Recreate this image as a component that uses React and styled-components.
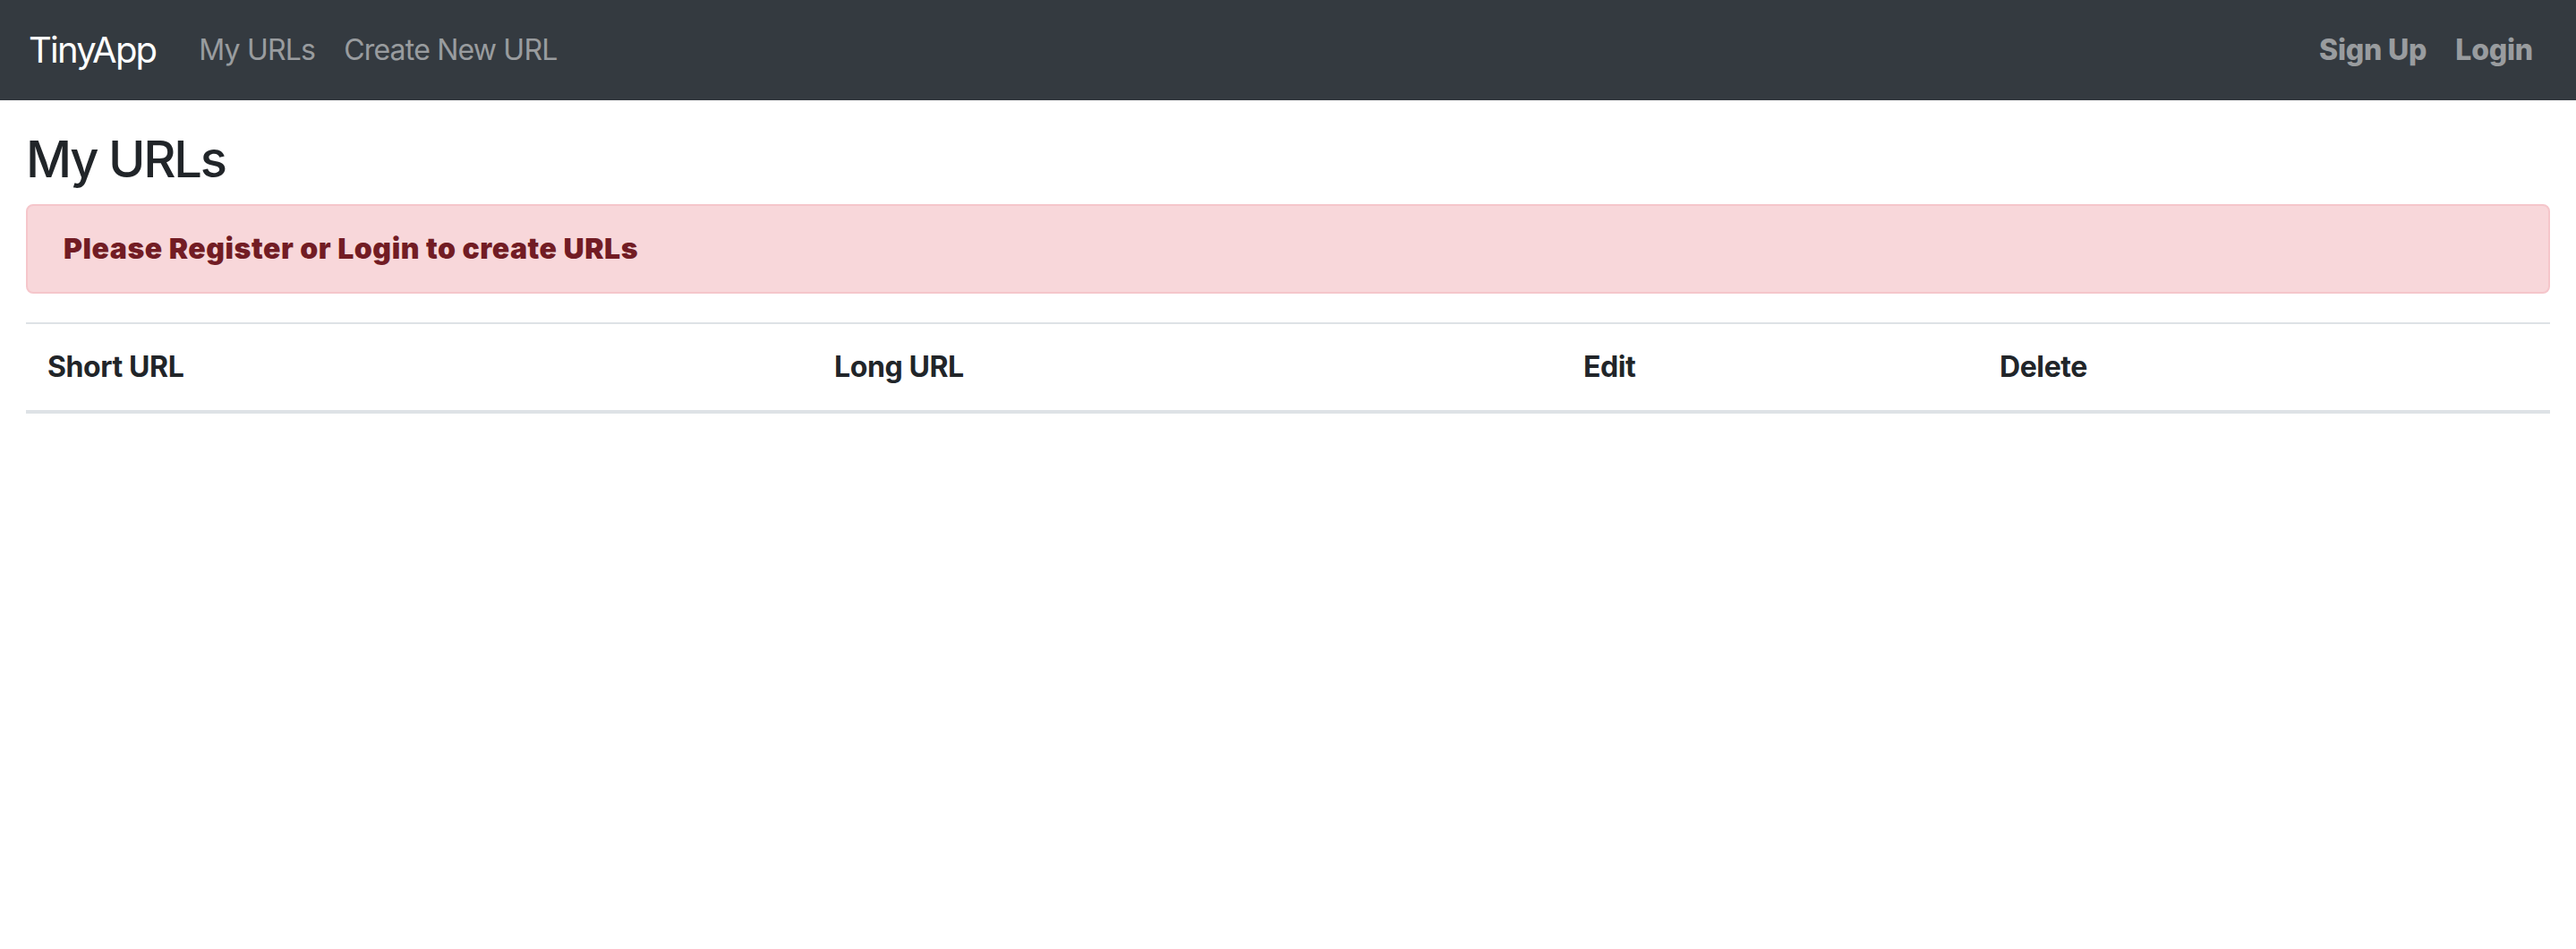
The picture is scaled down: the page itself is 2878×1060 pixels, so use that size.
import React from 'react'
import styled, { createGlobalStyle } from 'styled-components'

const GlobalStyle = createGlobalStyle`
  html, body {
    margin: 0;
    padding: 0;
    background: #fff;
  }
  body {
    font-family: Inter, "Noto Sans", "Liberation Sans", sans-serif;
    font-size: 32px;
    line-height: 1.5;
    color: #212529;
  }
`

const Navbar = styled.nav`
  display: flex;
  align-items: center;
  justify-content: space-between;
  height: 112px;
  box-sizing: border-box;
  padding: 16px 32px;
  background: #343a40;
`

const NavGroup = styled.div`
  display: flex;
  align-items: center;
`

const Brand = styled.a`
  font-size: 40px;
  line-height: 60px;
  color: #fff;
  margin-right: 32px;
  text-decoration: none;
  letter-spacing: -1.8px;
`

const NavLink = styled.a`
  padding: 0 16px;
  font-size: 32px;
  line-height: 48px;
  color: rgba(255, 255, 255, 0.5);
  text-decoration: none;
  font-weight: ${p => (p.$bold ? 800 : 400)};
  letter-spacing: ${p => (p.$bold ? '-0.2px' : '-0.8px')};
`

const Container = styled.main`
  padding: 33px 29px 0;
`

const Title = styled.h3`
  margin: 0 0 16px;
  font-size: 56px;
  line-height: 1.2;
  font-weight: 500;
  letter-spacing: -2.2px;
`

const Alert = styled.div`
  padding: 24px 40px;
  margin-bottom: 32px;
  border: 2px solid #f5c6cb;
  border-radius: 8px;
  background: #f8d7da;
  color: #721c24;
  font-size: 32px;
  line-height: 48px;
  font-weight: 900;
  letter-spacing: 0.55px;
`

const Table = styled.table`
  width: 100%;
  border-collapse: collapse;
  table-layout: fixed;
`

const Th = styled.th`
  width: ${p => p.$w || 'auto'};
  text-align: left;
  padding: 24px;
  font-size: 32px;
  line-height: 48px;
  font-weight: 700;
  letter-spacing: -0.4px;
  border-top: 2px solid #dee2e6;
  border-bottom: 4px solid #dee2e6;
`

export default function App() {
  return (
    <>
      <GlobalStyle />
      <Navbar>
        <NavGroup>
          <Brand href="#">TinyApp</Brand>
          <NavLink href="#">My URLs</NavLink>
          <NavLink href="#">Create New URL</NavLink>
        </NavGroup>
        <NavGroup>
          <NavLink href="#" $bold>Sign Up</NavLink>
          <NavLink href="#" $bold>Login</NavLink>
        </NavGroup>
      </Navbar>
      <Container>
        <Title>My URLs</Title>
        <Alert>Please Register or Login to create URLs</Alert>
        <Table>
          <thead>
            <tr>
              <Th $w="831px">Short URL</Th>
              <Th $w="789px">Long URL</Th>
              <Th $w="417px">Edit</Th>
              <Th>Delete</Th>
            </tr>
          </thead>
        </Table>
      </Container>
    </>
  )
}
